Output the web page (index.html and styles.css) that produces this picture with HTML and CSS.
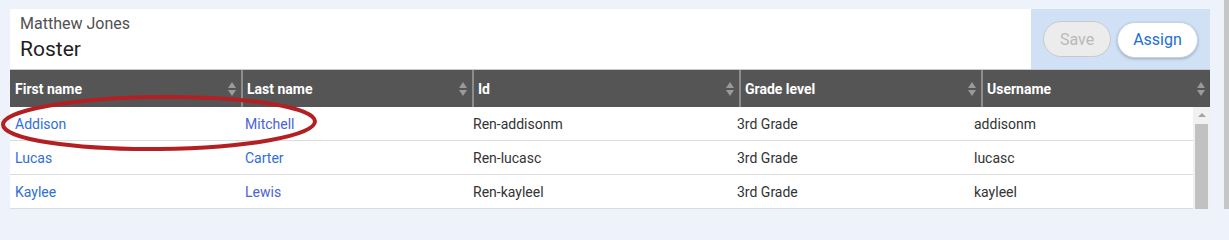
FILE: index.html
```html
<!DOCTYPE html>
<html>
<head>
<meta charset="utf-8">
<link rel="stylesheet" href="styles.css">
</head>
<body>
<div class="page">
  <div class="card">
    <div class="card-header">
      <div class="titles">
        <div class="owner">Matthew Jones</div>
        <div class="title">Roster</div>
      </div>
      <div class="actions">
        <button class="btn btn-disabled">Save</button>
        <button class="btn btn-primary">Assign</button>
      </div>
    </div>
    <div class="thead">
      <div class="th"><span>First name</span><i class="sort"></i></div>
      <div class="th"><span>Last name</span><i class="sort"></i></div>
      <div class="th"><span>Id</span><i class="sort"></i></div>
      <div class="th"><span>Grade level</span><i class="sort"></i></div>
      <div class="th last"><span>Username</span><i class="sort"></i></div>
    </div>
    <div class="tbody">
      <div class="rows">
        <div class="tr">
          <div class="td"><a class="link">Addison</a></div>
          <div class="td"><a class="link visited">Mitchell</a></div>
          <div class="td">Ren-addisonm</div>
          <div class="td">3rd Grade</div>
          <div class="td">addisonm</div>
        </div>
        <div class="tr">
          <div class="td"><a class="link">Lucas</a></div>
          <div class="td"><a class="link">Carter</a></div>
          <div class="td">Ren-lucasc</div>
          <div class="td">3rd Grade</div>
          <div class="td">lucasc</div>
        </div>
        <div class="tr">
          <div class="td"><a class="link">Kaylee</a></div>
          <div class="td"><a class="link visited">Lewis</a></div>
          <div class="td">Ren-kayleel</div>
          <div class="td">3rd Grade</div>
          <div class="td">kayleel</div>
        </div>
      </div>
      <div class="scrollbar">
        <div class="scroll-arrow"></div>
        <div class="scroll-thumb"></div>
      </div>
    </div>
  </div>
  <div class="page-scroll"></div>
</div>
<svg class="annotation" width="322" height="62" viewBox="0 0 322 62">
  <ellipse cx="159" cy="29" rx="156" ry="26" fill="none" stroke="#b32024" stroke-width="4" transform="rotate(-0.6 159 29)"/>
</svg>
</body>
</html>
```
FILE: styles.css
```css
* { box-sizing: border-box; }
html, body { margin: 0; padding: 0; height: 209px; overflow: hidden; }
body {
  width: 1229px;
  background: #eef3fb;
  font-family: Roboto, "Liberation Sans", Arial, sans-serif;
  position: relative;
}
.page {
  display: flex;
  height: 209px;
  padding-left: 10px;
  gap: 14px;
}
.card {
  width: 1200px;
  margin-top: 9px;
  background: #fff;
  display: flex;
  flex-direction: column;
}
.card-header {
  display: flex;
  height: 60px;
}
.titles {
  flex: 1;
  padding: 5px 10px 0 10px;
}
.owner {
  font-size: 16px;
  color: #505050;
  line-height: 19px;
}
.title {
  font-size: 21px;
  color: #1e1e1e;
  line-height: 26px;
  margin-top: 3px;
}
.actions {
  width: 179px;
  background: #d0e1f6;
  display: flex;
  align-items: center;
  gap: 6px;
  padding-left: 12px;
}
.btn {
  font-family: Roboto, "Liberation Sans", Arial, sans-serif;
  font-size: 16px;
  height: 36px;
  border-radius: 18px;
  padding: 0;
  cursor: pointer;
}
.btn-disabled {
  background: #ececec;
  border: 1px solid #c9c9c9;
  color: #b9b9b9;
  width: 68px;
}
.btn-primary {
  background: #fff;
  border: 1px solid #c3d1e4;
  color: #1a6fd8;
  width: 81px;
  box-shadow: 0 1px 3px rgba(0,0,0,0.25);
  margin-top: 1px;
}
.thead {
  display: grid;
  grid-template-columns: 233px 231px 267px 242px 227px;
  border-top: 1px solid #c8c8c8;
  height: 38px;
}
.th {
  background: #555;
  color: #fff;
  font-weight: 700;
  font-size: 14px;
  display: flex;
  align-items: center;
  justify-content: space-between;
  padding: 0 5px 0 5px;
  border-right: 2px solid #8c8c8c;
}
.th.last { border-right: none; padding-right: 5px; }
.th + .th { padding-left: 4px; }
.sort {
  width: 8px;
  height: 16px;
  position: relative;
  display: block;
}
.sort::before, .sort::after {
  content: "";
  position: absolute;
  left: 0;
  border-left: 4px solid transparent;
  border-right: 4px solid transparent;
}
.sort::before { top: 1px; border-bottom: 6px solid #9a9a9a; }
.sort::after { bottom: 1px; border-top: 6px solid #9a9a9a; }
.tbody {
  display: flex;
  flex: 1;
}
.rows { width: 1183px; }
.tr {
  display: grid;
  grid-template-columns: 230px 228px 264px 237px 224px;
  height: 34px;
  border-bottom: 1px solid #dcdcdc;
}
.td {
  font-size: 14px;
  color: #333;
  padding-left: 5px;
  display: flex;
  align-items: center;
}
.link { color: #2f6ed8; text-decoration: none; }
.link.visited { color: #4a62d6; }
.scrollbar {
  width: 17px;
  background: #f1f1f1;
  display: flex;
  flex-direction: column;
  align-items: center;
}
.scroll-arrow {
  margin-top: 6px;
  width: 0; height: 0;
  border-left: 4px solid transparent;
  border-right: 4px solid transparent;
  border-bottom: 4px solid #a3a3a3;
}
.scroll-thumb {
  margin-top: 7px;
  width: 13px;
  flex: 1;
  background: #c1c1c1;
}
.page-scroll {
  width: 5px;
  background: #c6c6c6;
}
.annotation {
  position: absolute;
  left: 0;
  top: 94px;
}
```
